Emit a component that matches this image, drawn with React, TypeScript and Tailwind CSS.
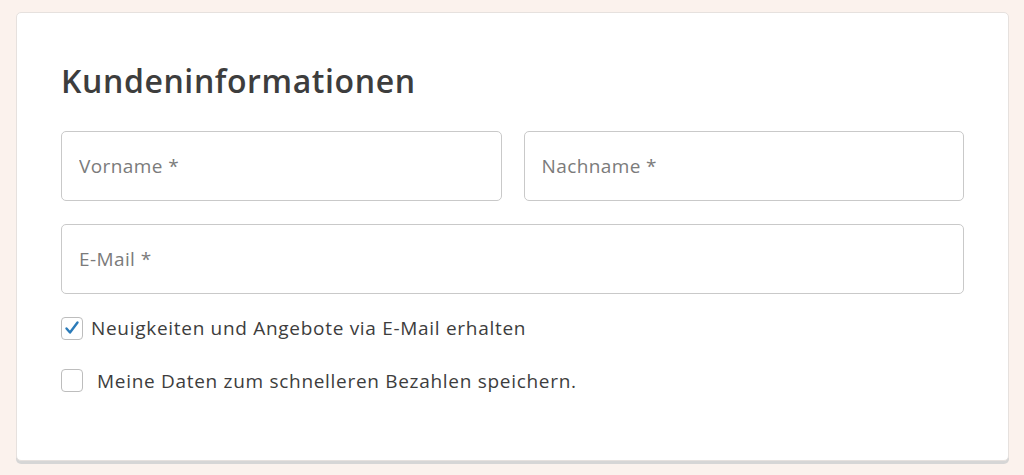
import React from "react";

const font = { fontFamily: "'Open Sans', 'Noto Sans', sans-serif" };

function Field({ label }: { label: string }) {
  return (
    <input
      type="text"
      placeholder={label}
      className="h-[70px] w-full rounded-[5px] border border-[#c9c9c9] bg-white px-[17px] text-[19px] tracking-[0.4px] text-[#333] placeholder:text-[#7b7b7b] outline-none"
    />
  );
}

function Check({ checked, label, gap }: { checked: boolean; label: string; gap: string }) {
  return (
    <label className={`flex items-center ${gap} text-[19px] tracking-[0.7px] text-[#3d3d3d]`}>
      <span className="flex h-[23px] w-[22px] shrink-0 items-center justify-center rounded-[4px] border border-[#bdbdbd] bg-white">
        {checked && (
          <svg width="16" height="16" viewBox="0 0 16 16" fill="none">
            <path d="M2.5 8.5 L6 12.5 L13.5 2.5" stroke="#2b7bb9" strokeWidth="2.4" strokeLinecap="round" strokeLinejoin="round" />
          </svg>
        )}
      </span>
      <span>{label}</span>
    </label>
  );
}

export default function App() {
  return (
    <div className="h-[475px] w-[1024px] bg-[#fbf2ed] pl-4 pr-[15px] pt-3" style={font}>
      <div className="h-[449px] rounded-[5px] border border-[#e6e1de] bg-white px-[44px] pt-[48px] shadow-[0_3px_0_#d6d6d6]">
        <h2 className="text-[32px] font-semibold leading-[40px] tracking-[0.6px] text-[#3d3d3d]">Kundeninformationen</h2>
        <div className="mt-[30px] grid grid-cols-2 gap-x-[22px] gap-y-[23px]">
          <Field label="Vorname *" />
          <Field label="Nachname *" />
          <div className="col-span-2">
            <Field label="E-Mail *" />
          </div>
        </div>
        <div className="mt-[20px] flex flex-col gap-[24px]">
          <Check checked label="Neuigkeiten und Angebote via E-Mail erhalten" gap="gap-[8px]" />
          <Check checked={false} label="Meine Daten zum schnelleren Bezahlen speichern." gap="gap-[14px]" />
        </div>
      </div>
    </div>
  );
}
